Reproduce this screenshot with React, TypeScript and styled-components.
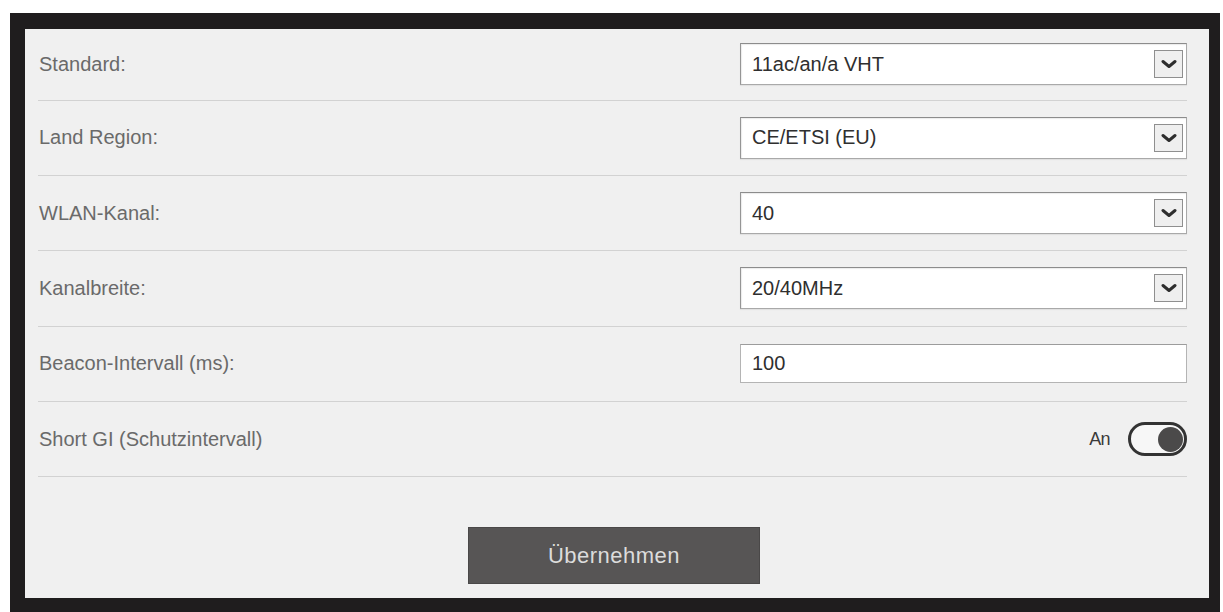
import React from "react";
import styled, { createGlobalStyle } from "styled-components";

const Global = createGlobalStyle`
  html, body { margin: 0; padding: 0; background: #ffffff; overflow: hidden; }
  body { font-family: "Liberation Sans", Arial, sans-serif; }
  * { box-sizing: border-box; }
`;

const Page = styled.div`
  width: 1223px;
  height: 612px;
  padding: 13px 3px 0 10px;
  background: #ffffff;
`;

const Frame = styled.div`
  height: 601px;
  border-style: solid;
  border-color: #1f1d1e;
  border-width: 16px 11px 16px 15px;
  background: #f0f0f0;
  padding: 0 22px 0 13px;
  display: flex;
  flex-direction: column;
`;

const Rows = styled.div`
  display: flex;
  flex-direction: column;
`;

const Row = styled.div`
  height: 75.4px;
  display: flex;
  align-items: center;
  justify-content: space-between;
  border-bottom: 1.5px solid #d2d2d2;
  &:first-child {
    height: 71.5px;
  }
`;

const Label = styled.span`
  font-size: 20px;
  color: #6a6a6a;
  padding-left: 1px;
`;

const Select = styled.div`
  width: 447px;
  height: 42px;
  display: flex;
  align-items: center;
  justify-content: space-between;
  background: #ffffff;
  border: 1px solid #a9a9a9;
  border-top-color: #8c8c8c;
  border-left-color: #959595;
  box-shadow: inset 1px 1px 1px rgba(0, 0, 0, 0.08), 0 1px 1px rgba(0,0,0,0.06);
  padding: 0 3px 0 11px;
`;

const Value = styled.span`
  font-size: 20px;
  color: #2f2f2f;
`;

const ArrowBox = styled.span`
  width: 29px;
  height: 28px;
  border: 1px solid #8f8f8f;
  background: #efefef;
  display: flex;
  align-items: center;
  justify-content: center;
`;

const TextInput = styled.input`
  width: 447px;
  height: 39px;
  border: 1px solid #b4b4b4;
  border-top-color: #9c9c9c;
  background: #ffffff;
  padding: 0 11px;
  font-family: "Liberation Sans", Arial, sans-serif;
  font-size: 20px;
  color: #2f2f2f;
  outline: none;
`;

const ToggleWrap = styled.div`
  display: flex;
  align-items: center;
  gap: 18px;
`;

const ToggleText = styled.span`
  font-size: 18px;
  color: #3a3a3a;
  letter-spacing: -0.6px;
`;

const Toggle = styled.span<{ $on: boolean }>`
  width: 59px;
  height: 34px;
  border: 3px solid #333333;
  border-radius: 17px;
  background: #f7f7f7;
  display: flex;
  align-items: center;
  justify-content: ${(p) => (p.$on ? "flex-end" : "flex-start")};
  padding: 0 1px;
`;

const Knob = styled.span`
  width: 25px;
  height: 25px;
  border-radius: 50%;
  background: #4b4a4a;
`;

const Footer = styled.div`
  flex: 1;
  display: flex;
  justify-content: center;
  align-items: flex-start;
  padding-top: 50px;
  padding-left: 3px;
`;

const Button = styled.button`
  width: 292px;
  height: 57px;
  background: #575555;
  border: 1px solid #4a4848;
  color: #dcdcdc;
  font-family: "Liberation Sans", Arial, sans-serif;
  font-size: 22px;
  letter-spacing: 0.5px;
  cursor: pointer;
`;

const Chevron = () => (
  <svg width="16" height="10" viewBox="0 0 16 10" aria-hidden="true">
    <path d="M2 2.5 L8 7.5 L14 2.5" fill="none" stroke="#2e2e2e" strokeWidth="3" strokeLinecap="round" strokeLinejoin="round" />
  </svg>
);

const SelectField = ({ value }: { value: string }) => (
  <Select role="combobox">
    <Value>{value}</Value>
    <ArrowBox>
      <Chevron />
    </ArrowBox>
  </Select>
);

export default function App() {
  return (
    <>
      <Global />
      <Page>
        <Frame>
          <Rows>
            <Row>
              <Label>Standard:</Label>
              <SelectField value="11ac/an/a VHT" />
            </Row>
            <Row>
              <Label>Land Region:</Label>
              <SelectField value="CE/ETSI (EU)" />
            </Row>
            <Row>
              <Label>WLAN-Kanal:</Label>
              <SelectField value="40" />
            </Row>
            <Row>
              <Label>Kanalbreite:</Label>
              <SelectField value="20/40MHz" />
            </Row>
            <Row>
              <Label>Beacon-Intervall (ms):</Label>
              <TextInput defaultValue="100" />
            </Row>
            <Row>
              <Label>Short GI (Schutzintervall)</Label>
              <ToggleWrap>
                <ToggleText>An</ToggleText>
                <Toggle $on={true}>
                  <Knob />
                </Toggle>
              </ToggleWrap>
            </Row>
          </Rows>
          <Footer>
            <Button>Übernehmen</Button>
          </Footer>
        </Frame>
      </Page>
    </>
  );
}
